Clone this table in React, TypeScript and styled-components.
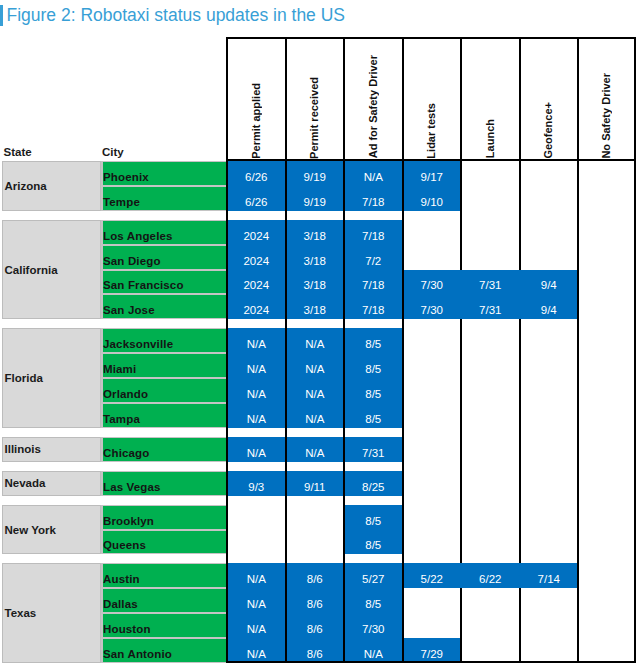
import React from "react";
import styled, { createGlobalStyle } from "styled-components";

type City = { name: string; values: string[] };
type Group = { state: string; cities: City[] };

const COLUMNS = [
  "Permit applied",
  "Permit received",
  "Ad for Safety Driver",
  "Lidar tests",
  "Launch",
  "Geofence+",
  "No Safety Driver",
];

const GROUPS: Group[] = [
  {
    state: "Arizona",
    cities: [
      { name: "Phoenix", values: ["6/26", "9/19", "N/A", "9/17"] },
      { name: "Tempe", values: ["6/26", "9/19", "7/18", "9/10"] },
    ],
  },
  {
    state: "California",
    cities: [
      { name: "Los Angeles", values: ["2024", "3/18", "7/18"] },
      { name: "San Diego", values: ["2024", "3/18", "7/2"] },
      { name: "San Francisco", values: ["2024", "3/18", "7/18", "7/30", "7/31", "9/4"] },
      { name: "San Jose", values: ["2024", "3/18", "7/18", "7/30", "7/31", "9/4"] },
    ],
  },
  {
    state: "Florida",
    cities: [
      { name: "Jacksonville", values: ["N/A", "N/A", "8/5"] },
      { name: "Miami", values: ["N/A", "N/A", "8/5"] },
      { name: "Orlando", values: ["N/A", "N/A", "8/5"] },
      { name: "Tampa", values: ["N/A", "N/A", "8/5"] },
    ],
  },
  {
    state: "Illinois",
    cities: [{ name: "Chicago", values: ["N/A", "N/A", "7/31"] }],
  },
  {
    state: "Nevada",
    cities: [{ name: "Las Vegas", values: ["9/3", "9/11", "8/25"] }],
  },
  {
    state: "New York",
    cities: [
      { name: "Brooklyn", values: ["", "", "8/5"] },
      { name: "Queens", values: ["", "", "8/5"] },
    ],
  },
  {
    state: "Texas",
    cities: [
      { name: "Austin", values: ["N/A", "8/6", "5/27", "5/22", "6/22", "7/14"] },
      { name: "Dallas", values: ["N/A", "8/6", "8/5"] },
      { name: "Houston", values: ["N/A", "8/6", "7/30"] },
      { name: "San Antonio", values: ["N/A", "8/6", "N/A", "7/29"] },
    ],
  },
];

const ROW_H = 24.9;
const GAP_H = 9;
const BLUE = "#0070c0";
const GRID_COLS = "99px 125px repeat(7, 58.5px)";

const GlobalStyle = createGlobalStyle`
  html, body {
    margin: 0;
    padding: 0;
    background: #ffffff;
  }
  body {
    font-family: "Liberation Sans", Arial, sans-serif;
    color: #1b1b1b;
  }
`;

const Page = styled.div`
  width: 641px;
  height: 671px;
  overflow: hidden;
  padding-top: 5px;
  box-sizing: border-box;
`;

const Title = styled.h1`
  margin: 0;
  height: 21px;
  display: flex;
  align-items: center;
  border-left: 3.5px solid #389fd6;
  padding-left: 3.5px;
  font-size: 17.5px;
  font-weight: 400;
  color: #389fd6;
  line-height: 21px;
`;

const Header = styled.div`
  display: grid;
  grid-template-columns: ${GRID_COLS};
  height: 124px;
  margin-top: 11px;
  margin-left: 2px;
`;

const CornerLabel = styled.div<{ $indent: number }>`
  display: flex;
  align-items: flex-end;
  padding: 0 0 2px ${(p) => p.$indent}px;
  font-size: 11.5px;
  font-weight: 700;
  line-height: 13px;
`;

const ColumnHead = styled.div<{ $last: boolean }>`
  display: flex;
  flex-direction: column;
  align-items: center;
  justify-content: flex-end;
  border-top: 2px solid #000;
  border-left: 2px solid #000;
  border-right: ${(p) => (p.$last ? "2px solid #000" : "none")};
  border-bottom: 2.5px solid #000;
  padding-bottom: 0.5px;
`;

const ColumnLabel = styled.span`
  writing-mode: vertical-rl;
  transform: rotate(180deg);
  font-size: 11px;
  font-weight: 700;
  line-height: 13px;
  white-space: nowrap;
  color: #111;
`;

const Body = styled.div<{ $rows: string }>`
  display: grid;
  grid-template-columns: ${GRID_COLS};
  grid-template-rows: ${(p) => p.$rows};
  margin-left: 2px;
`;

const StateCell = styled.div<{ $span: number }>`
  grid-row: span ${(p) => p.$span};
  display: flex;
  align-items: center;
  padding-left: 1.5px;
  background: #d9d9d9;
  border: 1px solid #bcbcbc;
  font-size: 11.5px;
  font-weight: 700;
  color: #1b1b1b;
`;

const CityCell = styled.div`
  display: flex;
  align-items: flex-end;
  padding-bottom: 1px;
  background: #00b050;
  border-top: 1px solid #c4c4c4;
  border-bottom: 1px solid #c4c4c4;
  border-left: 2px solid #c4c4c4;
  font-size: 11.5px;
  font-weight: 700;
  line-height: 13px;
  color: #141414;
  letter-spacing: 0.15px;
`;

const DataCell = styled.div<{
  $filled: boolean;
  $last: boolean;
  $bottom: boolean;
  $bleed: boolean;
}>`
  display: flex;
  align-items: flex-end;
  justify-content: center;
  padding-bottom: ${(p) => (p.$bottom ? 0 : 2)}px;
  background: ${(p) => (p.$filled ? BLUE : "#ffffff")};
  border-left: 2px solid ${(p) => (p.$bleed ? BLUE : "#000")};
  border-right: ${(p) => (p.$last ? "2px solid #000" : "none")};
  border-bottom: ${(p) => (p.$bottom ? "2px solid #000" : "none")};
  font-size: 11.5px;
  line-height: 13px;
  color: #ffffff;
`;

const Spacer = styled.div`
  grid-column: span 2;
`;

const buildRows = () =>
  GROUPS.map((g) => g.cities.map(() => `${ROW_H}px`).join(" ")).join(` ${GAP_H}px `);

export default function App() {
  const lastGroup = GROUPS.length - 1;

  return (
    <Page>
      <GlobalStyle />
      <Title>Figure 2: Robotaxi status updates in the US</Title>

      <Header>
        <CornerLabel $indent={1.5}>State</CornerLabel>
        <CornerLabel $indent={1}>City</CornerLabel>
        {COLUMNS.map((c, i) => (
          <ColumnHead key={c} $last={i === COLUMNS.length - 1}>
            <ColumnLabel>{c}</ColumnLabel>
          </ColumnHead>
        ))}
      </Header>

      <Body $rows={buildRows()}>
        {GROUPS.map((group, gi) => (
          <React.Fragment key={group.state}>
            <StateCell $span={group.cities.length}>{group.state}</StateCell>
            {group.cities.map((city, ci) => {
              const isBottom = gi === lastGroup && ci === group.cities.length - 1;
              return (
                <React.Fragment key={city.name}>
                  <CityCell>{city.name}</CityCell>
                  {COLUMNS.map((col, k) => {
                    const value = city.values[k] ?? "";
                    const filled = value !== "";
                    const leftFilled = k > 0 && (city.values[k - 1] ?? "") !== "";
                    return (
                      <DataCell
                        key={col}
                        $filled={filled}
                        $last={k === COLUMNS.length - 1}
                        $bottom={isBottom}
                        $bleed={k >= 4 && filled && leftFilled}
                      >
                        {value}
                      </DataCell>
                    );
                  })}
                </React.Fragment>
              );
            })}
            {gi < lastGroup && (
              <>
                <Spacer />
                {COLUMNS.map((col, k) => (
                  <DataCell
                    key={`gap-${col}`}
                    $filled={false}
                    $last={k === COLUMNS.length - 1}
                    $bottom={false}
                    $bleed={false}
                  />
                ))}
              </>
            )}
          </React.Fragment>
        ))}
      </Body>
    </Page>
  );
}
